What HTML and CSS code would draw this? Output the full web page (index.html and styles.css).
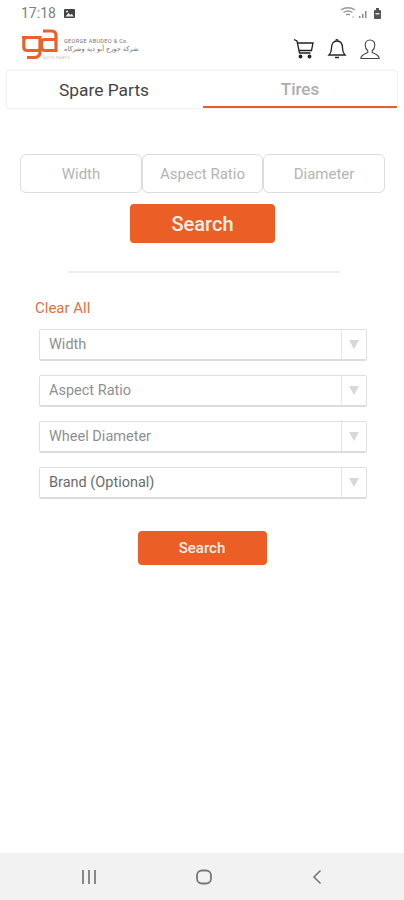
FILE: index.html
```html
<!DOCTYPE html>
<html lang="en">
<head>
<meta charset="utf-8">
<title>Tires</title>
<link rel="stylesheet" href="styles.css">
</head>
<body>
<div class="screen">
  <div class="status">
    <div class="status-left">
      <span class="time">17:18</span>
      <svg class="pic" width="13" height="11" viewBox="0 0 13 11"><rect x="1" y="1" width="11" height="9" rx="1" fill="#444"/><path d="M2.500 8.500 5.500 5l2 2 1.300-1.200 2 2.700z" fill="#eee"/><circle cx="4" cy="3.500" r="1" fill="#eee"/></svg>
    </div>
    <svg class="sys" width="44" height="14" viewBox="0 0 44 14"><path d="M1 4c4-3 10-3 14 0M3.500 6.500c3-2 6-2 9 0M6 9c1.300-1 2.700-1 4 0" fill="none" stroke="#999" stroke-width="1.300"/><circle cx="13" cy="11" r=".8" fill="#aaa"/><path d="M19 12h1.500v-2H19zM22 12h1.500V8H22zM25 12h1.500V5H25z" fill="#888"/><rect x="34" y="4" width="7" height="9" rx="1" fill="#555"/><rect x="36" y="2" width="3" height="2" fill="#555"/><rect x="35.500" y="7" width="4" height="1.500" fill="#ddd"/></svg>
  </div>

  <header class="header">
    <div class="brand">
      <div class="brand-mark">
        <svg class="logo" width="37" height="32" viewBox="0 0 37 32" fill="none" stroke="#e8622a" stroke-width="3.200">
          <path d="M1 9.500H19V24Q19 29.500 13 29.500H6"/>
          <path d="M19 9.500H6Q2.800 9.500 2.800 13v6q0 3.500 3.200 3.500H19"/>
          <path d="M22 3h8.500q4.500 0 4.500 4.500V22.500H24q-3.500 0-3.500-3.500v-4q0-3.500 3.500-3.500h11"/>
        </svg>
        <span class="brand-sub">AUTO PARTS</span>
      </div>
      <div class="brand-text">
        <span class="brand-en">GEORGE ABUDEO &amp; Co.</span>
        <span class="brand-ar" lang="ar" dir="rtl">شركة جورج أبو دية وشركاه</span>
      </div>
    </div>
    <div class="actions">
      <svg width="22" height="22" viewBox="0 0 22 22" fill="none" stroke="#222" stroke-width="1.300"><path d="M1 1.500 4 3l2.500 12h11M4.500 5H20l-1.500 7.500H6"/><circle cx="7.500" cy="18.500" r="1.300" fill="#222"/><circle cx="16.500" cy="18.500" r="1.300" fill="#222"/></svg>
      <svg width="20" height="22" viewBox="0 0 20 22" fill="none" stroke="#222" stroke-width="1.300"><path d="M2 17c2-2 2.500-3 2.500-7 0-4 2-7 5.500-7s5.500 3 5.500 7c0 4 .5 5 2.500 7z"/><path d="M8 19.500h4M9 2.500c0-1.300 2-1.300 2 0"/></svg>
      <svg width="22" height="22" viewBox="0 0 22 22" fill="none" stroke="#444" stroke-width="1.100"><path d="M11 2c-3 0-4.800 2.200-4.800 5 0 2.500 1 4.500 2.600 5.800v1.700C6 15.800 2 16.500 1.800 20.500h18.400c-.2-4-4.200-4.700-7-6v-1.700c1.600-1.300 2.600-3.300 2.600-5.800 0-2.800-1.800-5-4.800-5z"/></svg>
    </div>
  </header>

  <nav class="tabs">
    <div class="tab">Spare Parts</div>
    <div class="tab tab-active">Tires</div>
  </nav>

  <section class="quick">
    <div class="fields">
      <div class="field">Width</div>
      <div class="field">Aspect Ratio</div>
      <div class="field">Diameter</div>
    </div>
    <button class="btn btn-large">Search</button>
  </section>

  <hr class="divider">

  <section class="filters">
    <a class="clear">Clear All</a>
    <div class="selects">
      <div class="select"><span class="select-label">Width</span><span class="select-arrow"><i class="tri"></i></span></div>
      <div class="select"><span class="select-label">Aspect Ratio</span><span class="select-arrow"><i class="tri"></i></span></div>
      <div class="select"><span class="select-label">Wheel Diameter</span><span class="select-arrow"><i class="tri"></i></span></div>
      <div class="select"><span class="select-label select-dark">Brand (Optional)</span><span class="select-arrow"><i class="tri"></i></span></div>
    </div>
    <button class="btn btn-small">Search</button>
  </section>

  <footer class="navbar">
    <svg width="16" height="16" viewBox="0 0 16 16" fill="#888"><rect x="1" y="1" width="2" height="14"/><rect x="7" y="1" width="2" height="14"/><rect x="13" y="1" width="2" height="14"/></svg>
    <svg width="18" height="18" viewBox="0 0 18 18" fill="none" stroke="#777" stroke-width="1.800"><rect x="2" y="2.500" width="14" height="13" rx="5"/></svg>
    <svg width="12" height="16" viewBox="0 0 12 16" fill="none" stroke="#777" stroke-width="1.600"><path d="M9.500 1.500 3 8l6.500 6.500"/></svg>
  </footer>
</div>
</body>
</html>
```
FILE: styles.css
```css
* { box-sizing: border-box; }
html, body { margin: 0; padding: 0; background: #fff; }
body { font-family: Roboto, "Liberation Sans", sans-serif; }
.screen { width: 404px; height: 900px; display: flex; flex-direction: column; overflow: hidden; }

.status { height: 28px; flex: none; padding: 0 20px 2px 21px; display: flex; justify-content: space-between; align-items: center; }
.status-left { display: flex; align-items: center; gap: 7px; }
.time { font-size: 14px; color: #808080; }
.pic, .sys { display: block; }

.header { height: 43px; flex: none; padding: 0 23px 0 21px; display: flex; justify-content: space-between; align-items: flex-start; }
.brand { display: flex; align-items: flex-start; gap: 6px; }
.brand-mark { position: relative; width: 37px; height: 32px; }
.logo { display: block; }
.brand-sub { position: absolute; left: 22px; top: 27px; font-size: 4px; line-height: 5px; letter-spacing: .4px; white-space: nowrap; color: #c9b7ad; }
.brand-text { display: flex; flex-direction: column; padding-top: 9px; }
.brand-en { font-size: 5.500px; line-height: 8px; letter-spacing: .35px; color: #707070; }
.brand-ar { font-family: "DejaVu Sans", sans-serif; font-size: 6.500px; line-height: 9px; color: #707070; }
.actions { display: flex; align-items: center; gap: 12px; padding-top: 10px; }
.actions svg { display: block; }

.tabs { flex: none; height: 37px; margin: 0 7px 1px; display: grid; grid-template-columns: 196px 194px; border-radius: 2px; box-shadow: 0 0 2px rgba(0,0,0,.22); }
.tab { display: flex; align-items: center; justify-content: center; font-size: 17.400px; color: #444; padding-right: 2px; }
.tab-active { color: #aeaeae; font-weight: 500; font-size: 17px; border-bottom: 2px solid #e2602c; padding: 0; }

.quick { flex: none; padding: 45px 19px 0 20px; display: flex; flex-direction: column; align-items: center; }
.fields { display: grid; grid-template-columns: 122px 121px 122px; width: 365px; }
.field { height: 39px; display: flex; align-items: center; justify-content: center; border: 1px solid #dcdcdc; border-radius: 6px; font-size: 15px; color: #b4b4b4; }
.btn { border: 0; padding: 0; color: #fbeee6; background: #eb5e26; font-family: inherit; display: block; }
.btn-large { width: 145px; height: 39px; margin-top: 11px; border-radius: 4px; font-size: 20px; font-weight: 500; }

.divider { flex: none; width: 272px; height: 2px; margin: 28px 0 0 68px; border: 0; background: #eeeeee; }

.filters { flex: none; padding: 25px 37px 0 35px; display: flex; flex-direction: column; }
.clear { font-size: 15px; line-height: 20px; color: #e0704a; }
.selects { display: flex; flex-direction: column; gap: 14px; margin: 11px 0 0 4px; }
.select { height: 32px; display: flex; align-items: stretch; border: 1px solid #e0e0e0; border-bottom: 2px solid #dcdcdc; border-radius: 2px; }
.select-label { flex: 1; display: flex; align-items: center; padding-left: 9px; font-size: 14.500px; color: #8f8f8f; }
.select-dark { color: #6c6c6c; }
.select-arrow { flex: none; width: 25px; display: flex; align-items: center; justify-content: center; border-left: 1px solid #e6e6e6; }
.tri { display: block; width: 0; height: 0; border-left: 5px solid transparent; border-right: 5px solid transparent; border-top: 9px solid #d8d8d8; }
.btn-small { align-self: center; width: 129px; height: 34px; margin: 32px 0 0 2px; border-radius: 4px; font-size: 15px; font-weight: 500; }

.navbar { margin-top: auto; flex: none; height: 47px; background: #f2f2f2; padding: 0 81px; display: flex; align-items: center; justify-content: space-between; }
.navbar svg { display: block; }
```
